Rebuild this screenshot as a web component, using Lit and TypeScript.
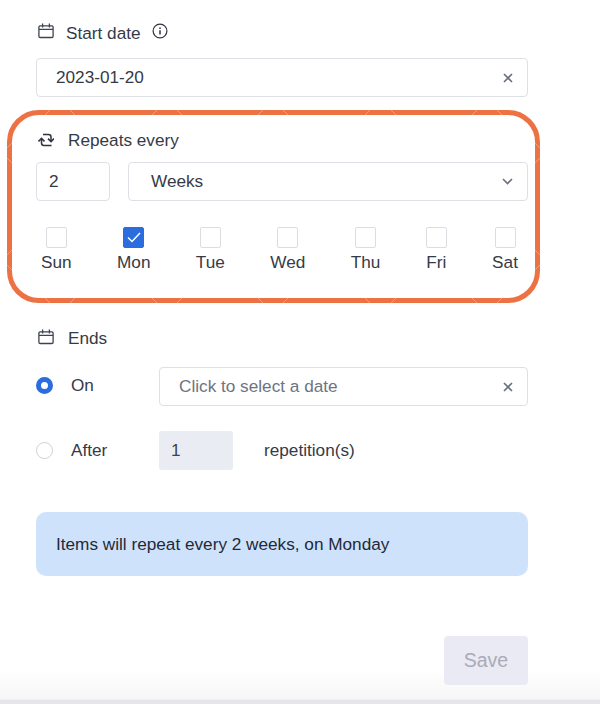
import { LitElement, html, css, svg } from "lit";
import { customElement } from "lit/decorators.js";

const calendar = html`<svg class="ico" width="16" height="16" viewBox="0 0 16 16" fill="none" stroke="#3d4350" stroke-width="1.3"><rect x="0.9" y="2.9" width="14.2" height="11.6" rx="1.2"/><path d="M1 6.4h14M4.6 0.6v3.8M11.4 0.6v3.8"/></svg>`;
const closeIcon = html`<svg width="10" height="10" viewBox="0 0 10 10" fill="none" stroke="#6b7080" stroke-width="1.7"><path d="M1 1l8 8M9 1l-8 8"/></svg>`;
const days = ["Sun", "Mon", "Tue", "Wed", "Thu", "Fri", "Sat"];
const hSpans = [[38, 68], [145, 175], [251, 281], [358, 389], [465, 495]];
const vSpans = [[33, 53], [140, 160]];

@customElement("app-root")
export class AppRoot extends LitElement {
  static styles = css`
    :host { display: block; width: 600px; height: 704px; overflow: hidden; font-family: "Liberation Sans", Arial, sans-serif; font-size: 17.2px; color: #363a46; }
    .page { box-sizing: border-box; height: 704px; padding: 21px 72px 0 36px; display: flex; flex-direction: column; background: linear-gradient(#fff 670px, #f6f6f7 699px, #e6e6ea 700px, #e6e6ea 704px); }
    .label { display: flex; align-items: center; height: 24px; flex: none; }
    .label span { padding-top: 1px; }
    .label .ico { margin: 0 14px 0 2px; }
    .start .ico { margin-right: 12px; position: relative; top: -2px; }
    .ends .ico { position: relative; top: -1px; }
    .info { margin: -4px 0 0 11px; }
    .field { box-sizing: border-box; display: flex; align-items: center; justify-content: space-between; height: 39px; background: #fff; border: 1px solid #dfe0e6; border-radius: 4px; padding: 0 14px 0 19px; flex: none; }
    .date { margin-top: 13px; }
    .section { position: relative; box-sizing: border-box; flex: none; height: 193px; margin: 13px -12px 0 -29px; padding: 13px 7px 0 24px; border: 5px solid #ec7244; border-radius: 32px; }
    .marks { position: absolute; left: -5px; top: -5px; pointer-events: none; }
    .controls { display: flex; gap: 18px; margin-top: 10px; }
    .num { width: 74px; padding-left: 12px; }
    .select { flex: 1; padding-left: 22px; }
    .days { display: flex; justify-content: space-between; margin-top: 26px; padding: 0 10px 0 5px; }
    .day { display: flex; flex-direction: column; align-items: center; }
    .box { box-sizing: border-box; width: 21px; height: 21px; border: 1px solid #dcdde2; border-radius: 2px; display: flex; align-items: center; justify-content: center; }
    .box.on { background: #2b6cdf; border-color: #2b6cdf; }
    .day span { line-height: 22px; margin-top: 3px; }
    .ends { margin-top: 23px; }
    .row { display: grid; grid-template-columns: 35px 88px 105px auto; align-items: center; flex: none; }
    .on-row { margin-top: 17px; grid-template-columns: 35px 88px 369px; }
    .after-row { margin-top: 25px; }
    .radio { box-sizing: border-box; width: 17px; height: 17px; border-radius: 50%; border: 1.8px solid #d0d1d6; }
    .radio.sel { border: 5.5px solid #2b6cdf; }
    .on-row .radio, .on-row .opt { position: relative; top: -1px; }
    .placeholder { color: #6f7380; }
    .count { box-sizing: border-box; height: 39px; width: 74px; background: #eaecf3; border-radius: 3px; display: flex; align-items: center; padding-left: 12px; color: #3d4350; }
    .banner { flex: none; box-sizing: border-box; height: 64px; margin-top: 42px; background: #cfe2fb; border-radius: 10px; display: flex; align-items: center; padding-left: 20px; color: #1f2937; }
    .actions { display: flex; justify-content: flex-end; margin-top: 60px; }
    .save { width: 84px; height: 49px; border: none; border-radius: 4px; background: #e9eaf3; color: #a9abb8; font: inherit; font-size: 19.5px; padding: 0; }
  `;

  render() {
    return html`<div class="page">
      <div class="label start">${calendar}<span>Start date</span>
        <svg class="info" width="16" height="16" viewBox="0 0 16 16" fill="none" stroke="#2f3340" stroke-width="1.2"><circle cx="8" cy="8" r="6.9"/><path d="M8 7.2v4.2" stroke-width="1.5"/><path d="M8 4.4v1.5" stroke-width="1.5"/></svg>
      </div>
      <div class="field date"><span>2023-01-20</span>${closeIcon}</div>
      <div class="section">
        <svg class="marks" width="533" height="193" viewBox="0 0 533 193" fill="none" stroke="#fff" stroke-opacity="0.3" stroke-width="1">
          ${hSpans.map(([a, b]) => svg`<path d="M${a} 5l5-5M${b} 5l-5-5M${a} 188l5 5M${b} 188l-5 5"/>`)}
          ${vSpans.map(([a, b]) => svg`<path d="M5 ${a}l-5 5M5 ${b}l-5-5M528 ${a}l5 5M528 ${b}l5-5"/>`)}
        </svg>
        <div class="label">
          <svg class="ico" width="16" height="16" viewBox="0 0 16 16" fill="none" stroke="#2f3340" stroke-width="1.5"><path d="M5 2.5h5.5Q13 2.5 13 5v4"/><path d="M10 6.6l3 3 3-3"/><path d="M13.5 13.5H6Q3.5 13.5 3.5 11V7"/><path d="M.5 9.4l3-3 3 3"/></svg>
          <span>Repeats every</span></div>
        <div class="controls">
          <div class="field num"><span>2</span></div>
          <div class="field select"><span>Weeks</span>
            <svg width="11" height="7" viewBox="0 0 11 7" fill="none" stroke="#6b7080" stroke-width="1.6"><path d="M1 1l4.5 4.5L10 1"/></svg>
          </div>
        </div>
        <div class="days">
          ${days.map((d) => html`<div class="day"><div class="box ${d === "Mon" ? "on" : ""}">${d === "Mon" ? svg`<svg width="14" height="11" viewBox="0 0 14 11" fill="none" stroke="#fff" stroke-width="1.5"><path d="M1 5.5l4 4L13 1"/></svg>` : ""}</div><span>${d}</span></div>`)}
        </div>
      </div>
      <div class="label ends">${calendar}<span>Ends</span></div>
      <div class="row on-row">
        <div class="radio sel"></div><span class="opt">On</span>
        <div class="field"><span class="placeholder">Click to select a date</span>${closeIcon}</div>
      </div>
      <div class="row after-row">
        <div class="radio"></div><span>After</span>
        <div class="count">1</div><span>repetition(s)</span>
      </div>
      <div class="banner">Items will repeat every 2 weeks, on Monday</div>
      <div class="actions"><button class="save">Save</button></div>
    </div>`;
  }
}
